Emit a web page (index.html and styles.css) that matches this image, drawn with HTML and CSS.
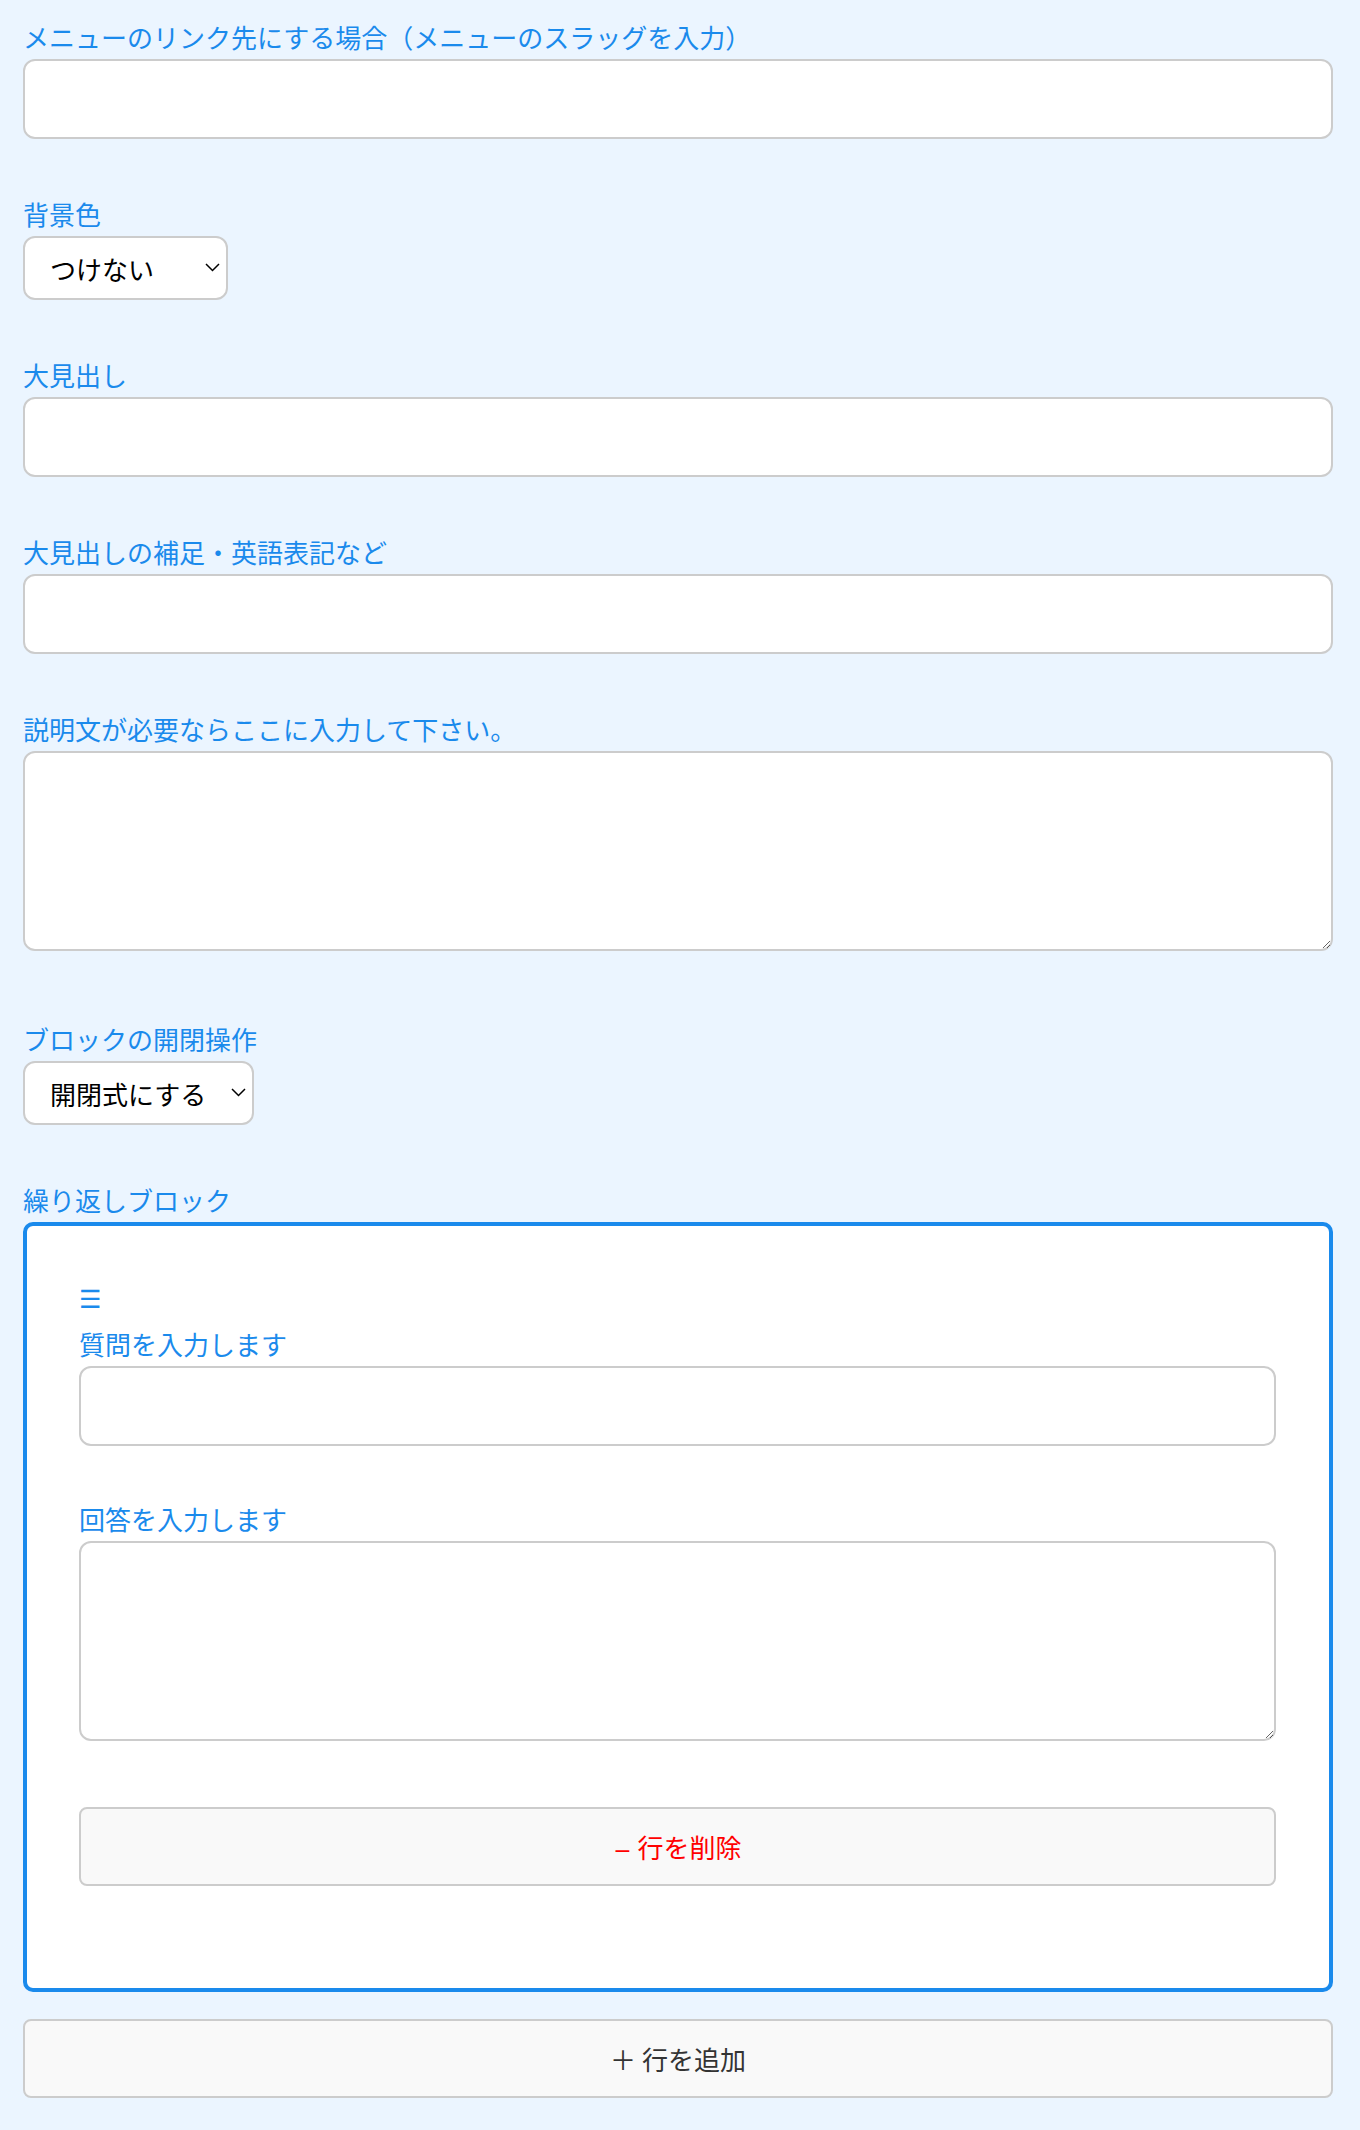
FILE: index.html
```html
<!DOCTYPE html>
<html lang="ja">
<head>
<meta charset="utf-8">
<title>ブロック設定</title>
<link rel="stylesheet" href="styles.css">
</head>
<body>
<div class="form">
  <div class="field">
    <label class="label">メニューのリンク先にする場合（メニューのスラッグを入力）</label>
    <input class="text-input" type="text">
  </div>
  <div class="field">
    <label class="label">背景色</label>
    <div class="select-wrap select-bg">
      <select class="select"><option>つけない</option></select>
      <svg class="chev" width="15" height="9" viewBox="0 0 15 9"><polyline points="1,1 7.5,7.5 14,1" fill="none" stroke="#000" stroke-width="1.5"/></svg>
    </div>
  </div>
  <div class="field">
    <label class="label">大見出し</label>
    <input class="text-input" type="text">
  </div>
  <div class="field">
    <label class="label">大見出しの補足・英語表記など</label>
    <input class="text-input" type="text">
  </div>
  <div class="field field-textarea">
    <label class="label">説明文が必要ならここに入力して下さい。</label>
    <textarea class="textarea"></textarea>
  </div>
  <div class="field">
    <label class="label">ブロックの開閉操作</label>
    <div class="select-wrap select-toggle">
      <select class="select"><option>開閉式にする</option></select>
      <svg class="chev" width="15" height="9" viewBox="0 0 15 9"><polyline points="1,1 7.5,7.5 14,1" fill="none" stroke="#000" stroke-width="1.5"/></svg>
    </div>
  </div>
  <div class="field field-repeat">
    <label class="label">繰り返しブロック</label>
    <div class="repeat-block">
      <div class="handle">☰</div>
      <div class="inner-field">
        <label class="label">質問を入力します</label>
        <input class="text-input" type="text">
      </div>
      <div class="inner-field inner-field-textarea">
        <label class="label">回答を入力します</label>
        <textarea class="textarea"></textarea>
      </div>
      <button class="btn btn-delete" type="button"><span class="sign">−</span> 行を削除</button>
    </div>
    <button class="btn btn-add" type="button">＋ 行を追加</button>
  </div>
</div>
</body>
</html>
```

FILE: styles.css
```css
html, body {
  margin: 0;
  padding: 0;
  background: #ebf5ff;
}

body {
  font-family: "Noto Sans CJK JP", "Noto Sans", sans-serif;
  font-size: 26px;
}

.form {
  padding: 20px 27px 30px 23px;
}

.field {
  margin-bottom: 58px;
}

.field-textarea {
  margin-bottom: 71px;
}

.field-repeat {
  margin-bottom: 0;
}

.label {
  display: block;
  color: #1a8aec;
  font-size: 26px;
  line-height: 34px;
  margin-bottom: 5px;
  white-space: nowrap;
}

.text-input,
.textarea {
  display: block;
  box-sizing: border-box;
  width: 100%;
  margin: 0;
  background: #fff;
  border: 2px solid #cccccc;
  border-radius: 12px;
  font-family: inherit;
  font-size: 26px;
  padding: 0 20px;
  outline: none;
}

.text-input {
  height: 80px;
}

.textarea {
  height: 200px;
  resize: vertical;
  padding: 14px 20px;
}

.select-wrap {
  position: relative;
  display: flex;
  height: 64px;
}

.select-bg {
  width: 205px;
}

.select-toggle {
  width: 231px;
}

.select {
  appearance: none;
  -webkit-appearance: none;
  box-sizing: border-box;
  width: 100%;
  height: 64px;
  margin: 0;
  padding: 0 30px 0 25px;
  background: #fff;
  border: 2px solid #cccccc;
  border-radius: 12px;
  color: #000;
  font-family: inherit;
  font-size: 26px;
  outline: none;
}

.chev {
  position: absolute;
  right: 8px;
  top: 27px;
  pointer-events: none;
}

.repeat-block {
  background: #fff;
  border: 4px solid #1a8aec;
  border-radius: 10px;
  padding: 57px 53px 102px 52px;
}

.handle {
  color: #1a8aec;
  font-family: "DejaVu Sans", sans-serif;
  font-size: 25px;
  line-height: 34px;
  height: 34px;
  margin-bottom: 10px;
}

.inner-field {
  margin-bottom: 56px;
}

.inner-field-textarea {
  margin-bottom: 66px;
}

.btn {
  display: block;
  box-sizing: border-box;
  width: 100%;
  height: 79px;
  margin: 0;
  background: #f9f9f9;
  border: 2px solid #cccccc;
  border-radius: 8px;
  font-family: inherit;
  font-size: 26px;
  cursor: pointer;
}

.btn-delete {
  color: #ff0000;
}

.sign {
  font-family: "DejaVu Sans", sans-serif;
  font-size: 22px;
}

.btn-add {
  margin-top: 27px;
  color: #333333;
}
```
